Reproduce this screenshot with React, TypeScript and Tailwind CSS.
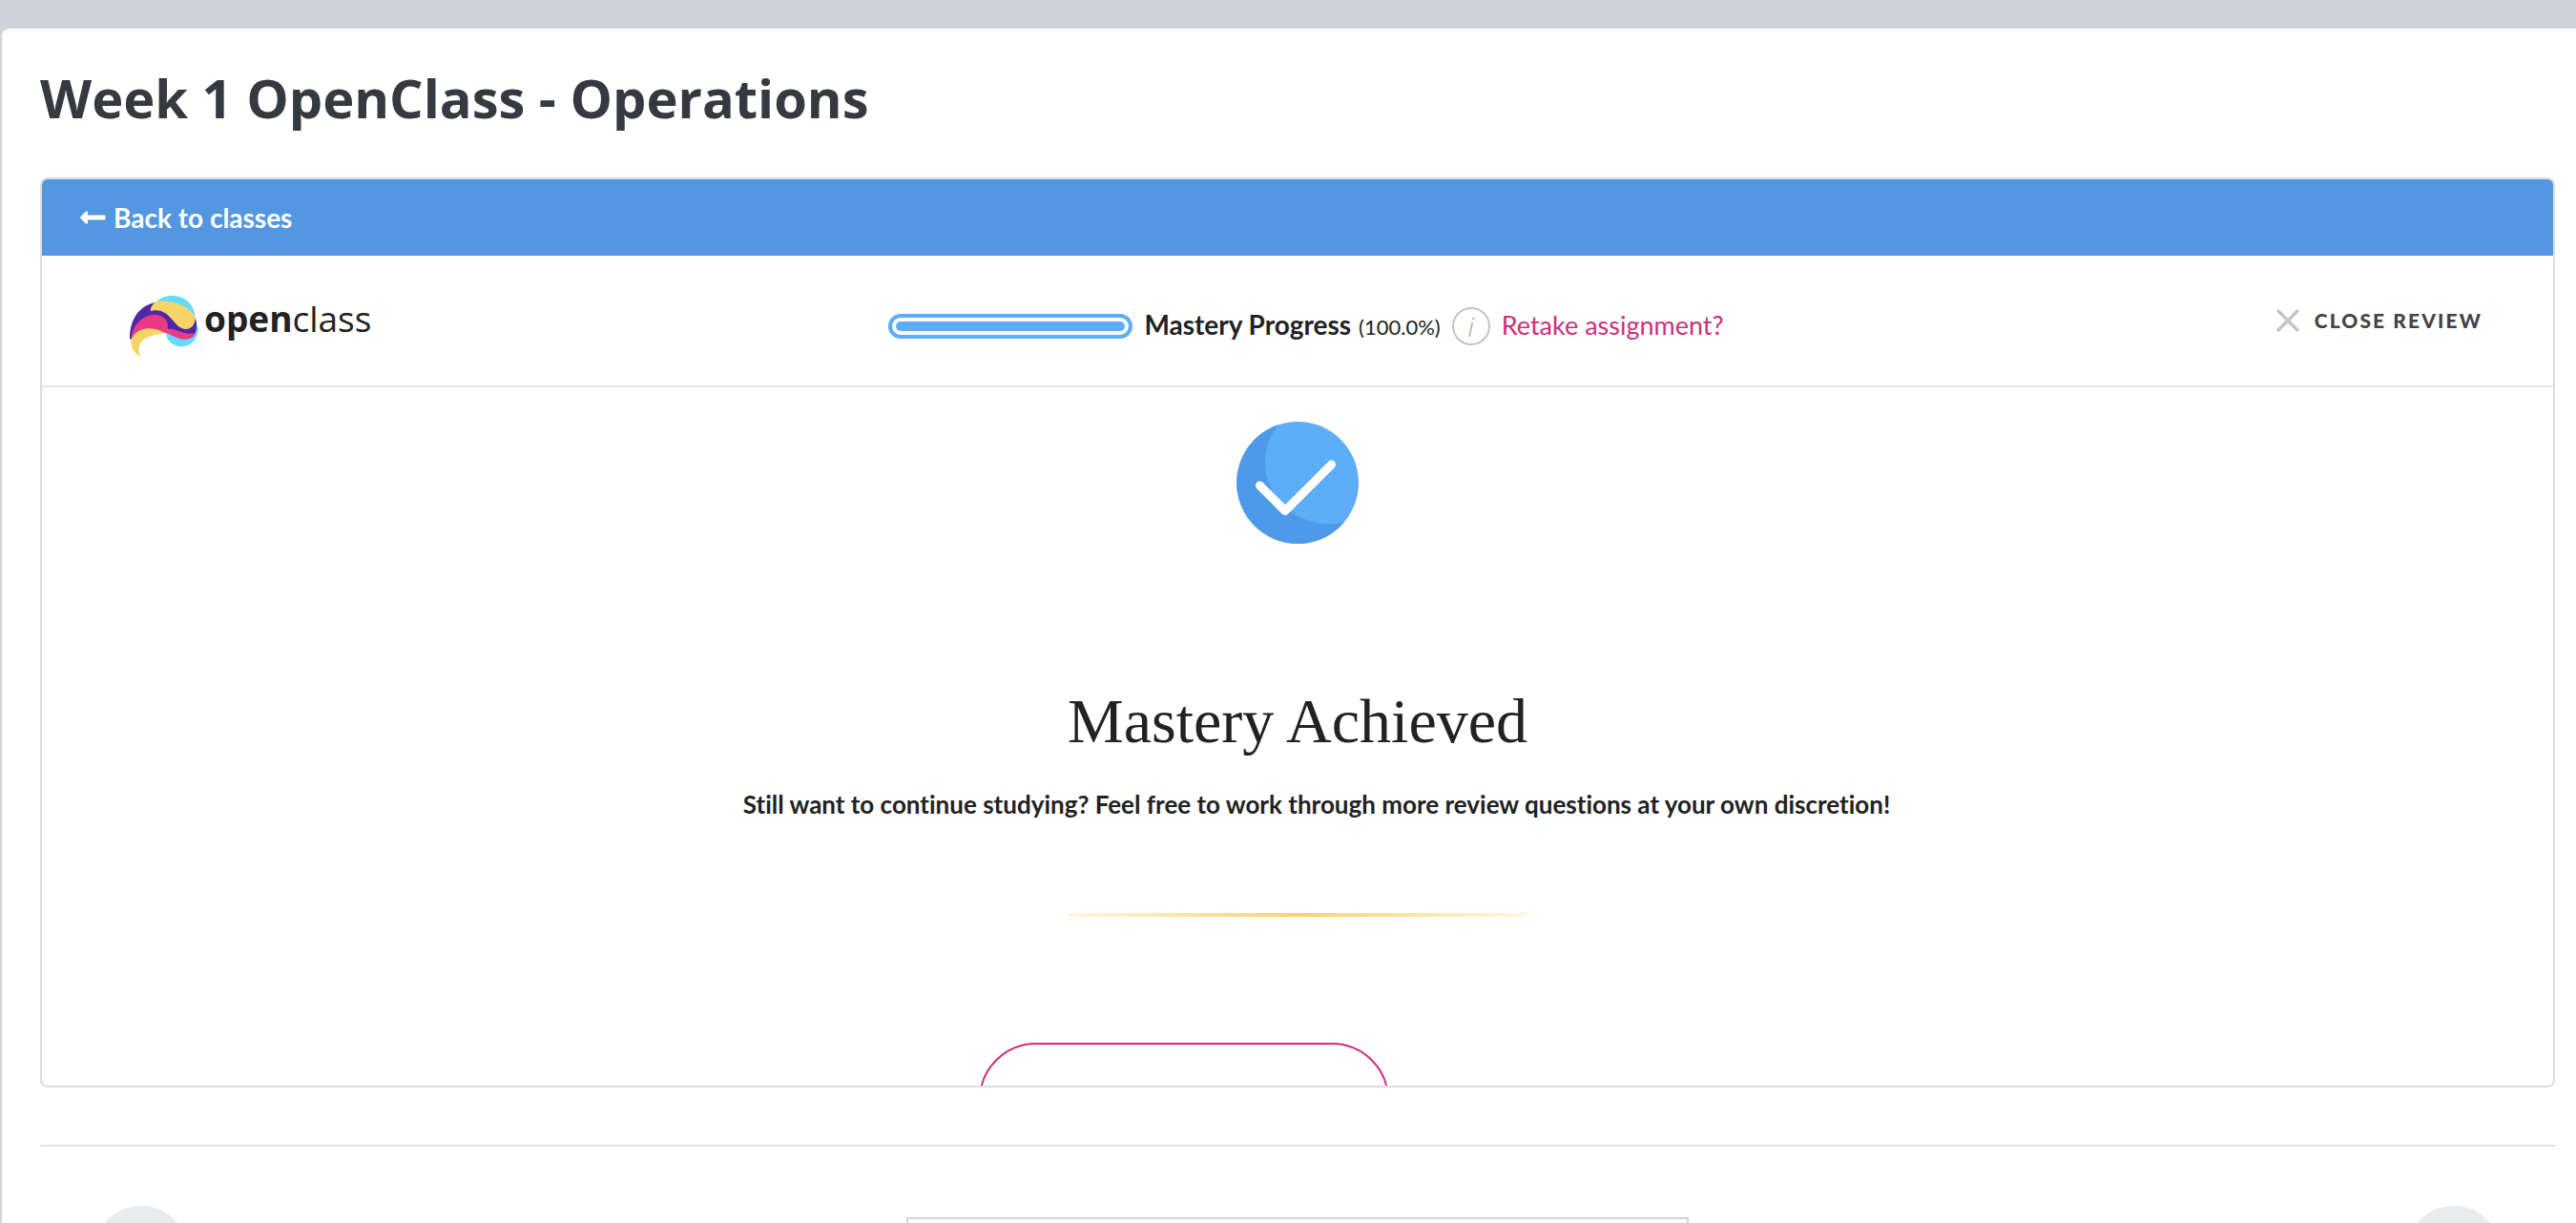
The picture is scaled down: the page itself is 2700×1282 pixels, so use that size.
function ArrowLeft() {
  return (
    <svg viewBox="0 0 27 14" className="h-3.5 w-[27px]" fill="currentColor" aria-hidden="true">
      <path d="M0.6 6 6 .6Q8 -.6 8 2V4.6H25.5Q26.5 4.6 26.5 5.6V8.4Q26.5 9.4 25.5 9.4H8V12Q8 14.6 6 13.4L.6 8Q-.3 7 .6 6Z" />
    </svg>
  );
}

function LogoMark() {
  return (
    <svg viewBox="0 0 216 192" className="h-16 w-[72px]" aria-hidden="true">
      <path fill="#66d9ff" d="M83 20C105-6 160-8 187 22C201 38 207 56 206 78L170 60Z" />
      <path fill="#66d9ff" d="M115 112C112 138 134 160 162 160C190 160 214 140 216 102L208 95Z" />
      <path fill="#5127a8" d="M0 136C0 70 32 30 83 20L120 40L160 100L206 72C214 90 210 106 206 118C190 135 150 115 118 104L60 90L4 136Z" />
      <path fill="#ea3a83" d="M4 136C8 98 34 62 76 60C108 58 126 84 118 106C136 96 176 130 207 116C204 130 188 138 170 137C142 135 136 122 112 117L58 112L4 138Z" />
      <path fill="#f7d468" d="M65 48C66 34 74 22 86 17C140 12 188 34 205 66C208 92 192 106 174 105C136 102 128 34 65 48Z" />
      <path fill="#f7d468" d="M4 140C20 98 68 94 112 117C64 124 12 138 34 192C12 180 3 160 4 140Z" />
    </svg>
  );
}

function CheckBadge() {
  return (
    <svg viewBox="0 0 128 128" className="size-32" aria-hidden="true">
      <circle cx="64" cy="64" r="64" fill="#5dadf9" />
      <path fill="#4d9be8" d="M44 3.2A64 64 0 1 0 113 105.500C70 115 30 84 30 43C30 28 35 14 44 3.200Z" />
      <path d="M24.500 67 51 93.500 99.500 45" fill="none" stroke="#fff" strokeWidth="9" strokeLinecap="round" strokeLinejoin="round" />
    </svg>
  );
}

function CloseIcon() {
  return (
    <svg viewBox="0 0 24 24" className="size-6" fill="none" stroke="#c6c6c6" strokeWidth="3.5" aria-hidden="true">
      <path d="M1 1 23 23M23 1 1 23" />
    </svg>
  );
}

function ReviewHeader() {
  return (
    <header className="flex h-[138px] items-center justify-between border-b-2 border-[#e5e5e5] pr-[74px] pl-[92px]">
      <a href="#home" className="flex flex-1 items-start gap-1.5 pt-3">
        <LogoMark />
        <span className="pt-0.5 font-['Open_Sans',sans-serif] text-[37px] leading-[44px] text-[#222]">
          <b>open</b>
          <span>class</span>
        </span>
      </a>
      <div className="flex items-center gap-3 pt-3">
        <div
          role="progressbar"
          aria-label="Mastery Progress"
          aria-valuenow={100}
          className="h-[26px] w-64 rounded-full border-4 border-[#5dadf9] p-1"
        >
          <div className="h-full w-full rounded-full bg-[#5dadf9]" />
        </div>
        <p className="flex items-baseline gap-2 pb-0.5 text-[28px] leading-9 text-[#222]">
          <b>Mastery Progress</b>
          <span className="text-[22px]">(100.0%)</span>
        </p>
        <button
          type="button"
          aria-label="About mastery progress"
          className="size-10 rounded-full border-2 border-[#c4c4c4] text-center font-['Open_Sans',sans-serif] text-[28px] leading-8 font-light text-[#a8a8a8] italic"
        >
          i
        </button>
        <a href="#retake" className="pb-0.5 text-[27px] leading-9 text-[#cc2f7b]">
          Retake assignment?
        </a>
      </div>
      <div className="flex flex-1 justify-end">
        <button type="button" className="flex items-center gap-4 text-[21px] font-black tracking-widest text-[#444]">
          <CloseIcon />
          CLOSE REVIEW
        </button>
      </div>
    </header>
  );
}

export default function App() {
  return (
    <div className="h-screen overflow-hidden bg-[#d0d4d9] pt-[30px] pl-0.5 font-['Lato',sans-serif] [font-variant-ligatures:none]">
      <main className="min-h-full rounded-tl-lg bg-white pr-[22px] pl-10">
        <h1 className="pt-[33px] pb-[45px] font-['Open_Sans',sans-serif] text-[56px] leading-[78px] font-bold text-[#343a40]">
          Week 1 OpenClass - Operations
        </h1>

        <section className="h-[954px] overflow-hidden rounded-lg border-2 border-[#ddd]">
          <nav className="flex h-20 items-center bg-[#5297df] pl-10 text-white">
            <a href="#classes" className="flex items-center gap-2 text-[28px] font-bold">
              <ArrowLeft />
              Back to classes
            </a>
          </nav>

          <ReviewHeader />

          <div className="flex flex-col items-center pt-9 text-[#222]">
            <CheckBadge />
            <h2 className="mt-[141px] font-['Liberation_Serif',serif] text-[66px] leading-[90px]">Mastery Achieved</h2>
            <p className="mt-6 pl-10 text-[26px] leading-9 font-bold">
              Still want to continue studying? Feel free to work through more review questions at your own discretion!
            </p>
            <div className="mt-24 h-1 w-[480px] bg-linear-to-r from-[#fdf6e0] via-[#f7d264] to-[#fdf6e0]" />
            <div className="mt-[132px] pr-[238px]">
              <button
                type="button"
                aria-label="Continue"
                className="block h-[120px] w-[430px] rounded-full border-2 border-[#cc2f7b]"
              />
            </div>
          </div>
        </section>

        <footer className="mt-[60px] flex justify-between border-t-2 border-[#dee2e6] px-14 pt-[62px]">
          <button type="button" aria-label="Previous" className="size-[100px] rounded-full bg-[#e9ebef]" />
          <select aria-label="Jump to" className="mt-3 h-20 w-[820px] appearance-none border-2 border-[#ced4da]" />
          <button type="button" aria-label="Next" className="size-[100px] rounded-full bg-[#e9ebef]" />
        </footer>
      </main>
    </div>
  );
}
